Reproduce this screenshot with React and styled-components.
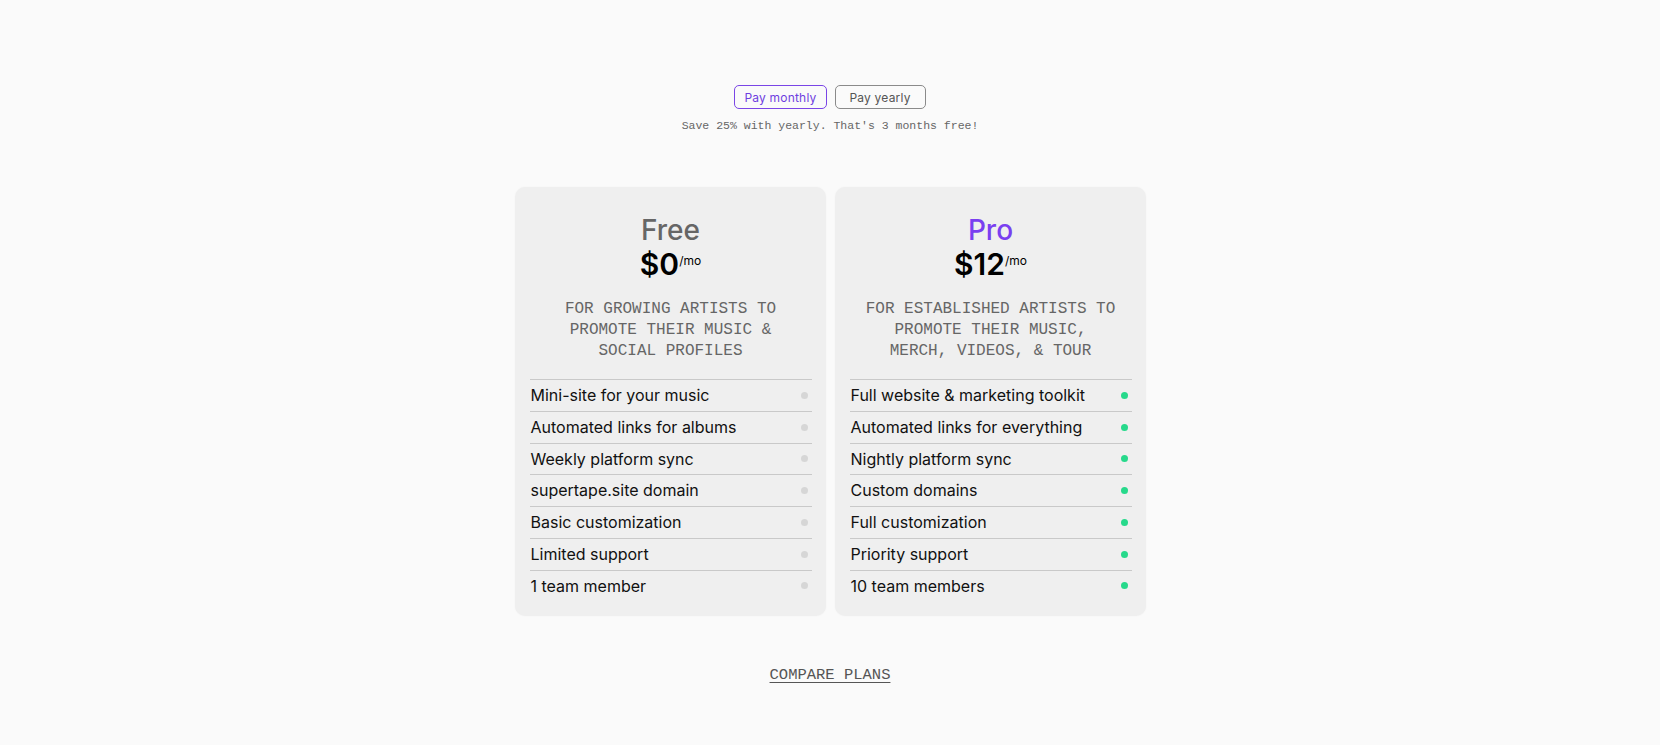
import React from "react"
import styled, { createGlobalStyle } from "styled-components"

const plans = [
  {
    name: "Free",
    price: "$0",
    accent: false,
    description: ["For growing artists to", "promote their music &", "social profiles"],
    features: [
      "Mini-site for your music",
      "Automated links for albums",
      "Weekly platform sync",
      "supertape.site domain",
      "Basic customization",
      "Limited support",
      "1 team member",
    ],
  },
  {
    name: "Pro",
    price: "$12",
    accent: true,
    description: ["For established artists to", "promote their music,", "merch, videos, & tour"],
    features: [
      "Full website & marketing toolkit",
      "Automated links for everything",
      "Nightly platform sync",
      "Custom domains",
      "Full customization",
      "Priority support",
      "10 team members",
    ],
  },
]

const App = () => {
  return (
    <>
      <GlobalStyle />
      <Page>
        <Toggle>
          <ToggleButton $active>Pay monthly</ToggleButton>
          <ToggleButton>Pay yearly</ToggleButton>
        </Toggle>
        <SaveNote>Save 25% with yearly. That's 3 months free!</SaveNote>
        <Cards>
          {plans.map((plan) => (
            <Card key={plan.name}>
              <PlanName $accent={plan.accent}>{plan.name}</PlanName>
              <Price>
                {plan.price}
                <sup>/mo</sup>
              </Price>
              <Description>
                {plan.description.map((line) => (
                  <span key={line}>{line}</span>
                ))}
              </Description>
              <Features>
                {plan.features.map((f) => (
                  <Feature key={f}>
                    {f}
                    <Dot $accent={plan.accent} />
                  </Feature>
                ))}
              </Features>
            </Card>
          ))}
        </Cards>
        <Compare href="#">Compare plans</Compare>
      </Page>
    </>
  )
}

const GlobalStyle = createGlobalStyle`
  html, body {
    margin: 0;
    padding: 0;
    background: #fafafa;
  }
  body {
    font-family: Inter, "Noto Sans", sans-serif;
    color: #111;
  }
  * {
    box-sizing: border-box;
  }
`

const Page = styled.div`
  display: flex;
  flex-direction: column;
  align-items: center;
  padding-top: 85px;
  min-height: 745px;
`

const Toggle = styled.div`
  display: flex;
  gap: 8px;
`

const ToggleButton = styled.button`
  height: 24px;
  min-width: 91px;
  padding: 0 9px;
  border-radius: 5px;
  background: transparent;
  font-family: Inter, "Noto Sans", sans-serif;
  font-size: 12px;
  letter-spacing: 0.2px;
  cursor: pointer;
  border: 1px solid ${({ $active }) => ($active ? "#7a45e6" : "#8a8a8a")};
  color: ${({ $active }) => ($active ? "#6f3fe0" : "#555")};
`

const SaveNote = styled.p`
  margin: 10px 0 0;
  font-family: "Liberation Mono", monospace;
  font-size: 11.5px;
  line-height: 14px;
  color: #666;
`

const Cards = styled.div`
  display: flex;
  gap: 9px;
  margin-top: 54px;
`

const Card = styled.div`
  width: 311px;
  background: #efefef;
  border-radius: 10px;
  padding: 26px 14px 15px 15px;
  display: flex;
  flex-direction: column;
  align-items: center;
  box-shadow: 0 0 2px rgba(0, 0, 0, 0.04);
`

const PlanName = styled.h2`
  margin: 0;
  font-size: 28px;
  line-height: 34px;
  font-weight: 500;
  color: ${({ $accent }) => ($accent ? "#7a3ff0" : "#666")};
`

const Price = styled.div`
  font-size: 30px;
  line-height: 34px;
  font-weight: 600;
  color: #000;
  sup {
    font-size: 12px;
    font-weight: 400;
    vertical-align: top;
    position: relative;
    top: -3px;
  }
`

const Description = styled.p`
  margin: 18px 0 0;
  display: flex;
  flex-direction: column;
  align-items: center;
  font-family: "Liberation Mono", monospace;
  font-size: 16px;
  line-height: 21px;
  text-transform: uppercase;
  color: #666;
`

const Features = styled.ul`
  list-style: none;
  margin: 17px 0 0;
  padding: 0;
  width: 100%;
`

const Feature = styled.li`
  display: flex;
  align-items: center;
  justify-content: space-between;
  border-top: 1px solid #c9c9c9;
  padding: 6px 4px 6px 1px;
  font-size: 16px;
  line-height: 18.75px;
  color: #111;
`

const Dot = styled.span`
  width: 7px;
  height: 7px;
  border-radius: 50%;
  background: ${({ $accent }) => ($accent ? "#27d98b" : "#d6d6d6")};
`

const Compare = styled.a`
  margin-top: 50px;
  font-family: "Liberation Mono", monospace;
  font-size: 15.5px;
  text-transform: uppercase;
  color: #555;
  text-decoration: underline;
  text-underline-offset: 3px;
`

export default App
